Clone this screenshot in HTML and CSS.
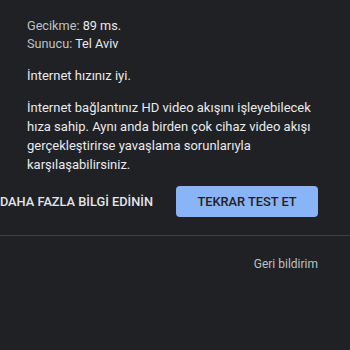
FILE: index.html
```html
<!DOCTYPE html>
<html lang="tr">
<head>
<meta charset="utf-8">
<link rel="stylesheet" href="styles.css">
</head>
<body>
<div class="page">
  <div class="stats">
    <div class="stat"><span class="label">Gecikme:</span> <span class="value">89 ms.</span></div>
    <div class="stat"><span class="label">Sunucu:</span> <span class="value">Tel Aviv</span></div>
  </div>
  <p class="headline">İnternet hızınız iyi.</p>
  <p class="desc">İnternet bağlantınız HD video akışını işleyebilecek hıza sahip. Aynı anda birden çok cihaz video akışı gerçekleştirirse yavaşlama sorunlarıyla karşılaşabilirsiniz.</p>
  <div class="actions">
    <button class="btn-text">DAHA FAZLA BİLGİ EDİNİN</button>
    <button class="btn-primary">TEKRAR TEST ET</button>
  </div>
  <div class="divider"></div>
  <div class="footer"><span class="feedback">Geri bildirim</span></div>
</div>
</body>
</html>
```
FILE: styles.css
```css
html, body {
  margin: 0;
  padding: 0;
  background: #202124;
  width: 350px;
  height: 350px;
  overflow: hidden;
}
body {
  font-family: Roboto, "Liberation Sans", sans-serif;
  color: #e8eaed;
}
.page {
  padding-top: 17px;
}
.stats {
  padding: 0 32px 0 27px;
  font-size: 12.7px;
  line-height: 18px;
}
.label {
  color: #bdc1c6;
}
.value {
  color: #e8eaed;
}
.headline {
  margin: 13px 0 0;
  padding: 0 32px 0 27px;
  font-size: 13px;
  line-height: 19px;
  color: #e8eaed;
}
.desc {
  margin: 13px 0 0;
  padding: 0 32px 0 27px;
  font-size: 13px;
  line-height: 19px;
  color: #e8eaed;
}
.actions {
  display: flex;
  justify-content: flex-end;
  align-items: center;
  gap: 7px;
  padding: 0 32px 0 0;
  margin-top: 12px;
}
button {
  font-family: Roboto, "Liberation Sans", sans-serif;
  font-size: 12.8px;
  font-weight: 500;
  border: none;
  cursor: pointer;
  height: 31px;
  white-space: nowrap;
  flex-shrink: 0;
}
.btn-text {
  background: transparent;
  color: #e3e5e8;
  padding: 0 16px;
}
.btn-primary {
  background: #8ab4f8;
  color: #202124;
  border-radius: 4px;
  width: 142px;
  padding: 0;
}
.divider {
  height: 1px;
  background: #3c4043;
  margin-top: 18px;
}
.footer {
  display: flex;
  justify-content: flex-end;
  padding: 20px 32px 0 0;
}
.feedback {
  font-size: 12px;
  color: #bdc1c6;
  line-height: 16px;
}
```
